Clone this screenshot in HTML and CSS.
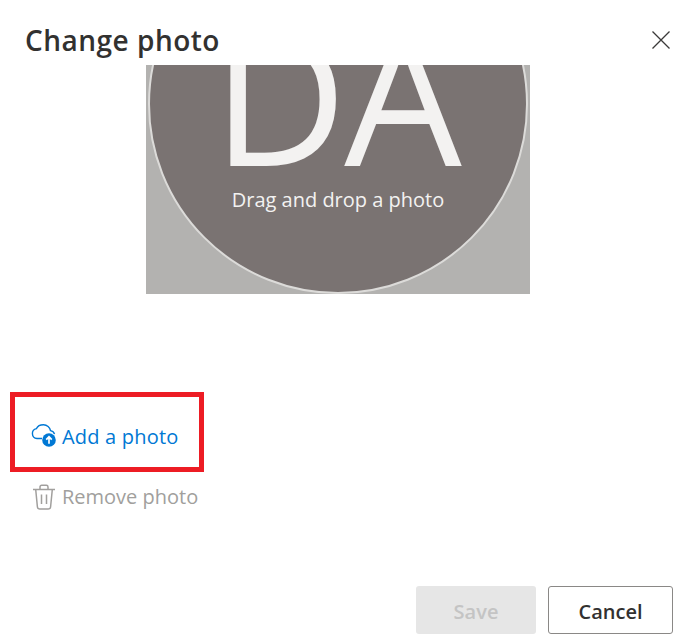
FILE: index.html
```html
<!DOCTYPE html>
<html lang="en">
<head>
  <meta charset="UTF-8" />
  <title>Change photo</title>
  <link rel="stylesheet" href="styles.css">
</head>
<body>
  <div class="dialog">
    <header class="dialog-head">
      <h1>Change photo</h1>
      <button class="close" aria-label="Close">
        <svg width="20" height="20" viewBox="0 0 20 20"><path d="M1.500 1.500 18.500 18.500M18.500 1.500 1.500 18.500" stroke="#3b3a39" stroke-width="1.300" fill="none"/></svg>
      </button>
    </header>

    <div class="photo">
      <div class="circle">
        <div class="initials">DA</div>
        <div class="hint">Drag and drop a photo</div>
      </div>
    </div>

    <div class="actions">
      <div class="action add">
        <svg width="26" height="26" viewBox="0 0 26 26">
          <path d="M11 14.500H6a5 5 0 0 1-.5-9.900C6.500 2.200 9.500.8 12.500.8c3.500 0 6.500 2.500 7 5.800 2 .3 3.500 1.700 4 3.500" fill="none" stroke="#0078d4" stroke-width="1.400"/>
          <circle cx="18" cy="16" r="6.800" fill="#0078d4"/>
          <path d="M18 19.800V13M15.200 15.600l2.800-2.800 2.800 2.800" fill="none" stroke="#fff" stroke-width="1.700"/>
        </svg>
        <span>Add a photo</span>
      </div>
      <div class="action remove">
        <svg width="26" height="26" viewBox="0 0 26 26">
          <path d="M2 5.500h22M9 5.500V3c0-1 .7-1.700 1.700-1.700h4.600c1 0 1.700.7 1.700 1.700v2.500M4.700 5.500l1.700 17.200c.1 1.300 1 2.200 2.300 2.200h8.600c1.300 0 2.200-.9 2.300-2.200l1.700-17.200M10.500 10.500v9.500M15.500 10.500v9.500" fill="none" stroke="#a19f9d" stroke-width="1.500"/>
        </svg>
        <span>Remove photo</span>
      </div>
      <div class="highlight"></div>
    </div>

    <footer class="dialog-foot">
      <button class="btn save" disabled>Save</button>
      <button class="btn cancel">Cancel</button>
    </footer>
  </div>
</body>
</html>
```

FILE: styles.css
```css
html, body {
  margin: 0;
  height: 100%;
  background: #fff;
}
body {
  font-family: 'Open Sans', 'Noto Sans', sans-serif;
  color: #323130;
  overflow: hidden;
}
.dialog {
  display: flex;
  flex-direction: column;
  height: 643px;
  box-sizing: border-box;
}
.dialog-head {
  display: flex;
  justify-content: space-between;
  align-items: center;
  height: 65px;
  padding: 15px 17px 0 25px;
  box-sizing: border-box;
}
.dialog-head h1 {
  margin: 0;
  font-size: 28px;
  font-weight: 600;
  letter-spacing: 0.5px;
  line-height: 38px;
}
.close {
  border: none;
  background: none;
  padding: 0;
  width: 20px;
  height: 20px;
}
.photo {
  width: 384px;
  height: 229px;
  margin-left: 146px;
  background: #b3b2b0;
  overflow: hidden;
}
.circle {
  width: 380px;
  height: 380px;
  margin: -151px 0 0 2px;
  box-sizing: border-box;
  border: 2px solid #dcdbd9;
  border-radius: 50%;
  background: #7a7372;
  color: #f3f2f1;
  display: flex;
  flex-direction: column;
  align-items: center;
}
.initials {
  margin: 98px 0 0 -5px;
  height: 160px;
  font-size: 186px;
  font-weight: 400;
  line-height: 160px;
  letter-spacing: -3px;
}
.hint {
  margin-top: 13px;
  font-size: 20px;
  line-height: 26px;
}
.actions {
  position: relative;
  display: flex;
  flex-direction: column;
  gap: 29px;
  margin-top: 127px;
  padding-left: 31px;
}
.action {
  display: flex;
  align-items: center;
  gap: 5px;
  height: 31px;
  font-size: 20px;
}
.add {
  color: #0078d4;
  letter-spacing: 0.2px;
}
.remove {
  color: #a19f9d;
}
.highlight {
  position: absolute;
  left: 10px;
  top: -29px;
  width: 194px;
  height: 80px;
  box-sizing: border-box;
  border: 5px solid #ed1c24;
}
.dialog-foot {
  display: flex;
  justify-content: flex-end;
  gap: 12px;
  margin-top: auto;
  padding: 0 15px 9px 0;
}
.btn {
  width: 125px;
  height: 48px;
  box-sizing: border-box;
  border-radius: 3px;
  font-family: inherit;
  font-size: 20px;
  font-weight: 600;
  padding: 2px 0 0;
}
.save {
  width: 120px;
  background: #e6e6e6;
  border: none;
  color: #c4c4c4;
}
.cancel {
  background: #fff;
  border: 1px solid #8a8886;
  color: #323130;
}
```
